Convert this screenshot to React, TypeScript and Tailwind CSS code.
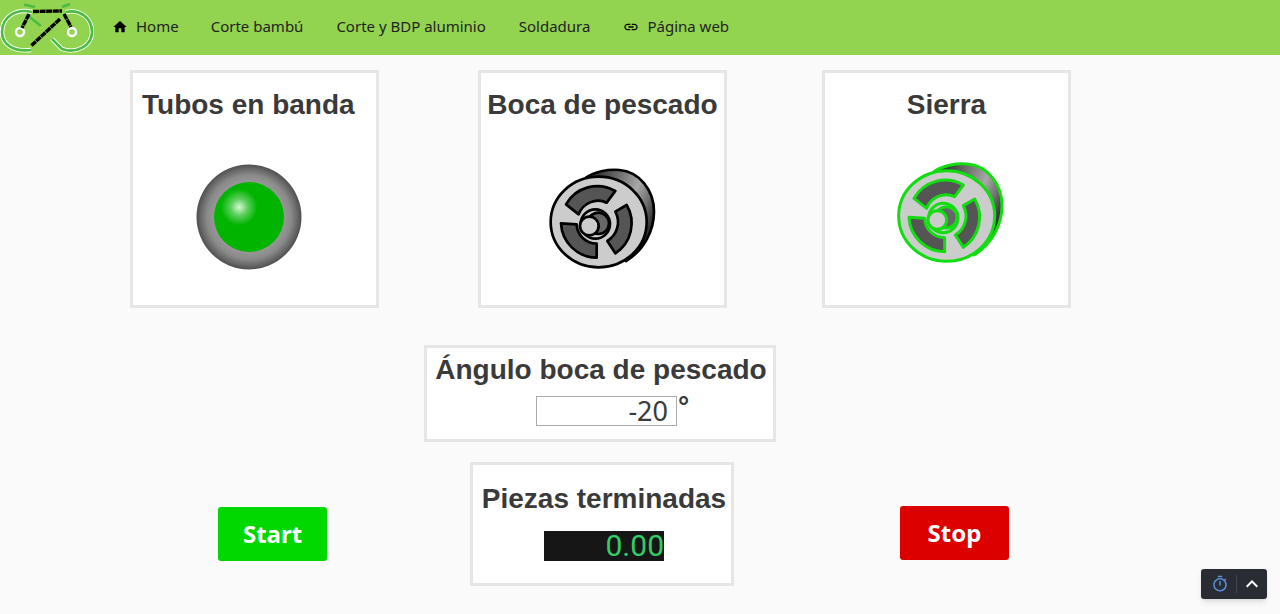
import React from 'react';
import { MdHome, MdLink, MdOutlineTimer, MdKeyboardArrowUp } from 'react-icons/md';

function Logo() {
  const loops = 'M32 9 C16 5 2 14 2 29 C2 42 14 49 31 47 M66 9 C80 6 92 15 92 29 C92 43 76 51 62 46 L52 36';
  return (
    <svg width="94" height="50" viewBox="0 0 94 50" fill="none" className="shrink-0">
      <path d={loops} stroke="#ffffff" strokeWidth="4.4" />
      <path d={loops} stroke="#4cbb44" strokeWidth="2.6" />
      <path d="M27 12 L41 23" stroke="#4cbb44" strokeWidth="2.4" />
      <path d="M24 1.5 L35 4 M62 4 L70 1" stroke="#4cbb44" strokeWidth="2.6" />
      <circle cx="20" cy="29" r="4" fill="#92d450" stroke="#ffffff" strokeWidth="2.4" />
      <circle cx="72" cy="29" r="4" fill="#92d450" stroke="#ffffff" strokeWidth="2.4" />
      <g stroke="#000000" strokeWidth="3.4" strokeDasharray="6 0.6">
        <path d="M33 8.5 L62 8" />
        <path d="M29 11 L22 25" />
        <path d="M64 11 L71 24" />
        <path d="M60 16 L31 43" />
      </g>
    </svg>
  );
}

function Led() {
  return (
    <svg width="106" height="106" viewBox="0 0 106 106">
      <defs>
        <radialGradient id="ledRing" cx="50%" cy="50%" r="50%">
          <stop offset="66%" stopColor="#979797" />
          <stop offset="80%" stopColor="#8a8a8a" />
          <stop offset="92%" stopColor="#686868" />
          <stop offset="100%" stopColor="#4f4f4f" />
        </radialGradient>
        <radialGradient id="ledShine" cx="0.36" cy="0.36" r="0.26">
          <stop offset="0%" stopColor="#d8f8d8" />
          <stop offset="45%" stopColor="#5fd05f" />
          <stop offset="100%" stopColor="#00b400" />
        </radialGradient>
      </defs>
      <circle cx="53" cy="53" r="52.5" fill="url(#ledRing)" />
      <circle cx="53" cy="53" r="35" fill="url(#ledShine)" />
    </svg>
  );
}

function Wheel({ id, line, lineWidth }: { id: string; line: string; lineWidth: number }) {
  return (
    <svg width="130" height="125" viewBox="0 0 390 375">
      <defs>
        <linearGradient id={id} x1="0.2" y1="0.05" x2="1" y2="0.5">
          <stop offset="0%" stopColor="#3c3c3c" />
          <stop offset="60%" stopColor="#a8a8a8" />
          <stop offset="82%" stopColor="#707070" />
          <stop offset="100%" stopColor="#333333" />
        </linearGradient>
      </defs>
      <g stroke={line} strokeWidth={lineWidth} strokeLinejoin="round">
        <path
          d="M150 68 C175 50 215 42 250 45 C310 50 354 105 354 170 C354 225 325 285 270 318 L200 200 Z"
          fill={`url(#${id})`}
        />
        <ellipse cx="188" cy="201" rx="144" ry="136" fill="#cccccc" />
        <path d="M90 148 A108 108 0 0 1 238 108 L212 143 A62 62 0 0 0 128 178 Z" fill="#555555" />
        <path d="M272 150 A108 108 0 0 1 238 295 L214 258 A66 66 0 0 0 238 170 Z" fill="#555555" />
        <path d="M75 205 L122 208 A60 60 0 0 0 182 266 L182 308 A108 108 0 0 1 75 205 Z" fill="#555555" />
        <circle cx="178" cy="207" r="44" fill="#cccccc" />
        <circle cx="187" cy="205" r="32" fill="#666666" />
        <circle cx="160" cy="213" r="28" fill="#cccccc" />
      </g>
    </svg>
  );
}

function NavItem({ label, icon, className }: { label: string; icon?: React.ReactNode; className?: string }) {
  return (
    <a className={`flex items-center gap-[8px] pb-[2px] text-[15px] text-[#222222] ${className ?? ''}`}>
      {icon}
      <span>{label}</span>
    </a>
  );
}

export default function App() {
  return (
    <div className="relative h-[614px] overflow-hidden bg-[#fafafa] font-['Noto_Sans',sans-serif]">
      {/* Navbar */}
      <nav className="flex h-[55px] items-center gap-[33px] bg-[#92d450]">
        <div className="mr-[-15px]">
          <Logo />
        </div>
        <NavItem label="Home" className="mr-[-1px]" icon={<MdHome className="h-[16px] w-[16px] text-black" />} />
        <NavItem label="Corte bambú" />
        <NavItem label="Corte y BDP aluminio" />
        <NavItem label="Soldadura" />
        <NavItem label="Página web" icon={<MdLink className="h-[16px] w-[16px] text-black" />} />
      </nav>

      {/* Estados */}
      <div className="mt-[15px] flex pl-[130px]">
        <section className="h-[238px] w-[249px] border-[3px] border-[#e6e6e6] bg-white">
          <h2 className="mt-[14px] pl-[9px] font-['Liberation_Sans',sans-serif] text-[28px] font-bold leading-[36px] text-[#3a3a3a]">
            Tubos en banda
          </h2>
          <div className="mt-[41px] flex justify-center pr-[12px]">
            <Led />
          </div>
        </section>
        <section className="ml-[99px] h-[238px] w-[249px] border-[3px] border-[#e6e6e6] bg-white">
          <h2 className="mt-[14px] text-center font-['Liberation_Sans',sans-serif] text-[28px] font-bold leading-[36px] text-[#3a3a3a]">
            Boca de pescado
          </h2>
          <div className="mt-[32px] flex justify-center pr-[4px]">
            <Wheel id="wheelBlack" line="#000000" lineWidth={8} />
          </div>
        </section>
        <section className="ml-[95px] h-[238px] w-[249px] border-[3px] border-[#e6e6e6] bg-white">
          <h2 className="mt-[14px] text-center font-['Liberation_Sans',sans-serif] text-[28px] font-bold leading-[36px] text-[#3a3a3a]">
            Sierra
          </h2>
          <div className="mt-[26px] flex justify-center pl-[5px]">
            <Wheel id="wheelGreen" line="#11dd11" lineWidth={9} />
          </div>
        </section>
      </div>

      {/* Ángulo */}
      <div className="mt-[37px] flex pl-[424px]">
        <section className="h-[97px] w-[352px] border-[3px] border-[#e6e6e6] bg-white">
          <h2 className="mt-[4px] pl-[2px] text-center font-['Liberation_Sans',sans-serif] text-[28px] font-bold leading-[36px] text-[#3a3a3a]">
            Ángulo boca de pescado
          </h2>
          <div className="mt-[8px] flex pl-[109px]">
            <input
              readOnly
              value="-20"
              className="h-[30px] w-[141px] border border-[#aaaaaa] bg-white pr-[8px] text-right text-[27px] leading-[30px] text-[#3a3a3a]"
            />
            <span className="ml-[1px] font-['Liberation_Sans',sans-serif] text-[28px] font-bold leading-[22px] text-[#3a3a3a]">
              °
            </span>
          </div>
        </section>
      </div>

      {/* Piezas y botones */}
      <div className="mt-[20px] flex items-start pl-[218px]">
        <button className="mt-[45px] h-[54px] w-[109px] rounded-[3px] bg-[#00d800] pb-[1px] text-[24px] font-bold text-white">
          Start
        </button>
        <section className="ml-[143px] h-[124px] w-[264px] border-[3px] border-[#e6e6e6] bg-white">
          <h2 className="mt-[16px] pl-[4px] text-center font-['Liberation_Sans',sans-serif] text-[28px] font-bold leading-[36px] text-[#3a3a3a]">
            Piezas terminadas
          </h2>
          <div className="ml-[71px] mt-[14px] flex h-[30px] w-[120px] items-center justify-end bg-[#161616] font-['Roboto',sans-serif] text-[30px] font-normal leading-[30px] text-[#33cc66]">
            0.00
          </div>
        </section>
        <button className="ml-[166px] mt-[44px] h-[54px] w-[109px] rounded-[3px] bg-[#dd0000] pb-[1px] text-[24px] font-bold text-white">
          Stop
        </button>
      </div>

      {/* Widget flotante */}
      <div className="absolute left-[1201px] top-[569px] flex h-[30px] w-[66px] items-center rounded-[3px] bg-[#2a2c33] shadow-md">
        <MdOutlineTimer className="ml-[10px] h-[18px] w-[18px] text-[#5b8fd9]" />
        <div className="ml-[7px] h-[18px] w-px bg-[#44464d]" />
        <MdKeyboardArrowUp className="ml-[3px] h-[24px] w-[24px] text-white" />
      </div>
    </div>
  );
}
